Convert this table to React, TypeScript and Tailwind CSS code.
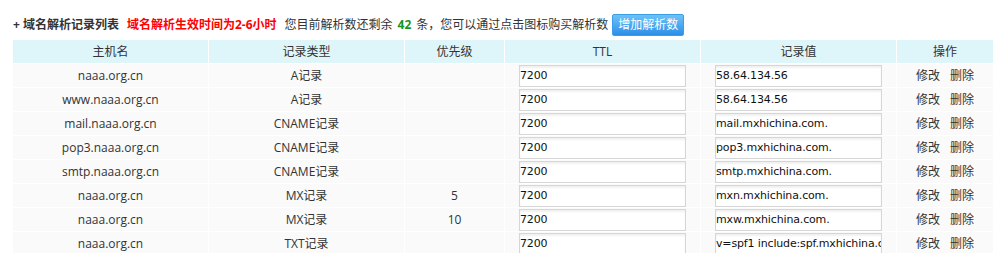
const ROWS = [
  { host: 'naaa.org.cn', type: 'A记录', mx: '', ttl: '7200', value: '58.64.134.56' },
  { host: 'www.naaa.org.cn', type: 'A记录', mx: '', ttl: '7200', value: '58.64.134.56' },
  { host: 'mail.naaa.org.cn', type: 'CNAME记录', mx: '', ttl: '7200', value: 'mail.mxhichina.com.' },
  { host: 'pop3.naaa.org.cn', type: 'CNAME记录', mx: '', ttl: '7200', value: 'pop3.mxhichina.com.' },
  { host: 'smtp.naaa.org.cn', type: 'CNAME记录', mx: '', ttl: '7200', value: 'smtp.mxhichina.com.' },
  { host: 'naaa.org.cn', type: 'MX记录', mx: '5', ttl: '7200', value: 'mxn.mxhichina.com.' },
  { host: 'naaa.org.cn', type: 'MX记录', mx: '10', ttl: '7200', value: 'mxw.mxhichina.com.' },
  { host: 'naaa.org.cn', type: 'TXT记录', mx: '', ttl: '7200', value: 'v=spf1 include:spf.mxhichina.com -all' },
];

const HEADERS = ['主机名', '记录类型', '优先级', 'TTL', '记录值', '操作'];
const WIDTHS = ['w-[195px]', 'w-[195px]', 'w-[99px]', 'w-[195px]', 'w-[195px]', ''];

function Field({ value }: { value: string }) {
  return (
    <input
      readOnly
      defaultValue={value}
      className="block h-[22px] w-[167px] mx-auto border border-[#d6d6d6] bg-white px-0 font-['DejaVu_Sans',sans-serif] text-[11px] tracking-[-0.15px] text-[#111] shadow-[inset_0_2px_2px_rgba(0,0,0,0.06)] outline-none"
    />
  );
}

export default function App() {
  return (
    <div className="h-[253px] w-[993px] overflow-hidden bg-white font-['Open_Sans','Noto_Sans_CJK_SC',sans-serif] text-[12px] text-[#333]">
      <div className="flex h-[39px] items-center pl-[13px] pt-[10px]">
        <span className="font-bold">+ 域名解析记录列表</span>
        <span className="ml-[8px] font-bold text-[#f00]">域名解析生效时间为2-6小时</span>
        <span className="ml-[8px]">您目前解析数还剩余</span>
        <span className="mx-[5px] font-bold text-[#18951b]">42</span>
        <span>条，您可以通过点击图标购买解析数</span>
        <button className="ml-[4px] h-[22px] rounded-[2px] border border-[#3a9fe6] bg-gradient-to-b from-[#6cc2f8] to-[#2b8fe8] px-[5px] text-[12px] leading-[20px] text-white">
          增加解析数
        </button>
      </div>
      <table className="ml-[12px] w-[982px] table-fixed border-separate border-spacing-px">
        <thead>
          <tr>
            {HEADERS.map((h, i) => (
              <th key={h} className={`h-[23px] bg-[#def5fa] p-0 text-center font-normal ${WIDTHS[i]}`}>
                {h}
              </th>
            ))}
          </tr>
        </thead>
        <tbody>
          {ROWS.map((r, i) => (
            <tr key={i}>
              <td className="h-[23px] bg-[#fafafa] p-0 text-center">{r.host}</td>
              <td className="bg-[#fafafa] p-0 text-center">{r.type}</td>
              <td className="bg-[#fafafa] p-0 text-center">{r.mx}</td>
              <td className="bg-[#fafafa] p-0">
                <Field value={r.ttl} />
              </td>
              <td className="bg-[#fafafa] p-0">
                <Field value={r.value} />
              </td>
              <td className="bg-[#fafafa] p-0 text-center whitespace-nowrap">
                修改<span className="ml-[10px]">删除</span>
              </td>
            </tr>
          ))}
        </tbody>
      </table>
    </div>
  );
}
